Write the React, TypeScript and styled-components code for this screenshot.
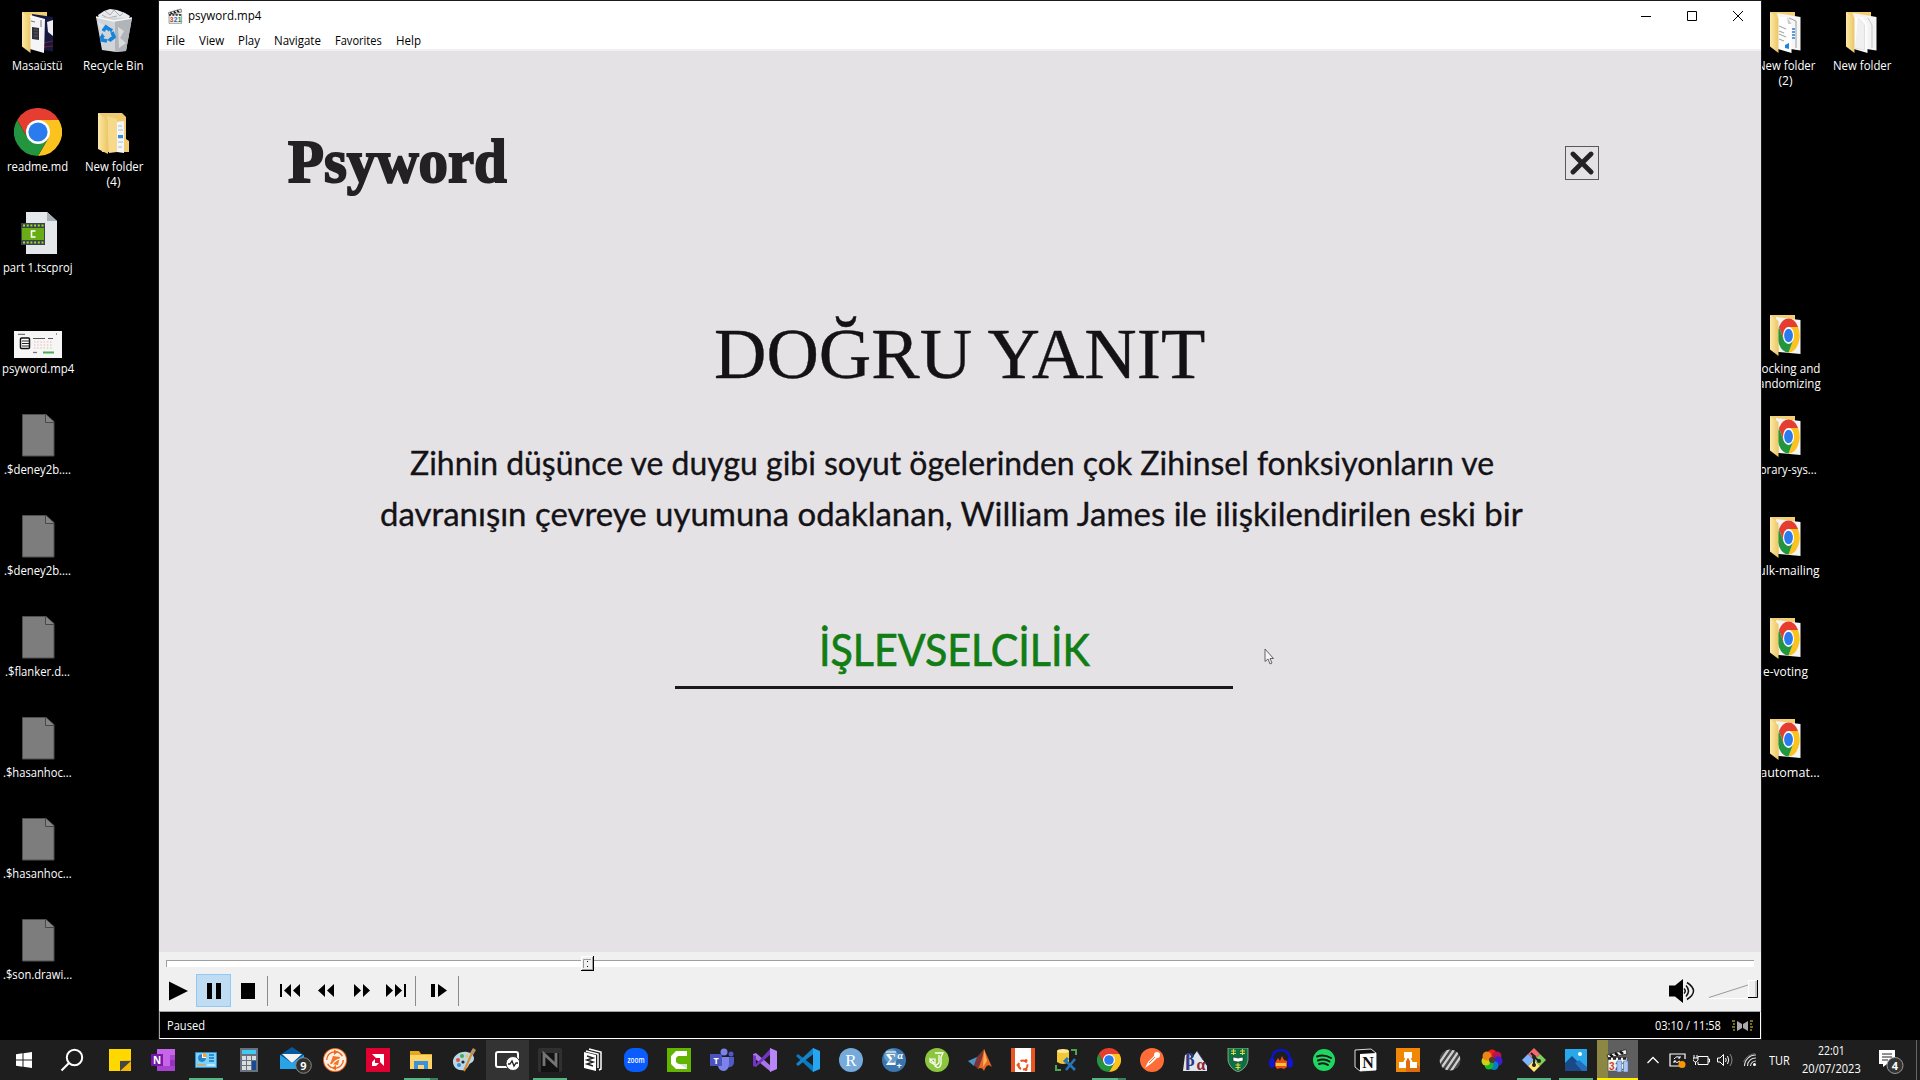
import React, { ReactNode, useLayoutEffect, useRef, useState } from "react";
import styled, { createGlobalStyle, css } from "styled-components";

const ui = `"Open Sans", "Noto Sans", "Liberation Sans", sans-serif`;

const Global = createGlobalStyle`
  * { box-sizing: border-box; }
  html, body { margin: 0; padding: 0; background: #000; overflow: hidden; }
  svg { display: block; flex: none; }
`;

/* ---------- text condensed or stretched to a set width ---------- */

const Slot = styled.span<{ $w: number }>`
  display: block;
  flex: none;
  width: ${(p) => p.$w}px;
  white-space: pre;
`;
const Stretch = styled.span`
  display: inline-block;
  transform-origin: 0 50%;
`;

function Fit({ w, children }: { w: number; children: string }) {
  const ref = useRef<HTMLSpanElement>(null);
  const [scale, setScale] = useState(1);
  useLayoutEffect(() => {
    if (ref.current) setScale(w / ref.current.offsetWidth);
  }, [w, children]);
  return (
    <Slot $w={w}>
      <Stretch ref={ref} style={{ transform: `scaleX(${scale})` }}>
        {children}
      </Stretch>
    </Slot>
  );
}

/* ---------- desktop ---------- */

const Desktop = styled.main`
  position: relative;
  display: flex;
  flex-direction: column;
  width: 1920px;
  height: 1080px;
  overflow: hidden;
  background: #000;
  font-family: ${ui};
  font-size: 12px;
  color: #fff;
`;
const IconGrid = styled.div`
  flex: 1;
  min-height: 0;
  display: grid;
  grid-template-columns: repeat(25, 76px);
  grid-auto-rows: 101px;
`;
const Shortcut = styled.div<{ $col: number; $row: number }>`
  grid-column: ${(p) => p.$col};
  grid-row: ${(p) => p.$row};
  display: flex;
  flex-direction: column;
  align-items: center;
  padding-top: 7px;
  svg { margin-bottom: 3px; }
`;
const Label = styled.div`
  display: flex;
  flex-direction: column;
  align-items: center;
  padding-right: 1px;
  line-height: 15px;
`;

function Chrome({ size = 24 }: { size?: number }) {
  return (
    <svg width={size} height={size} viewBox="0 0 48 48">
      <ChromeArt />
    </svg>
  );
}
function ChromeArt() {
  return (
    <g>
      <path d="M3.2 12A24 24 0 0 1 44.8 12H24L13.6 30Z" fill="#e53d30" />
      <path d="M44.8 12A24 24 0 0 1 24 48L34.4 30L24 12Z" fill="#fcc31e" />
      <path d="M24 48A24 24 0 0 1 3.2 12L13.6 30H34.4Z" fill="#24953f" />
      <circle cx="24" cy="24" r="12" fill="#fff" />
      <circle cx="24" cy="24" r="9.6" fill="#2a7bee" />
    </g>
  );
}

const folderDefs = (
  <defs>
    <linearGradient id="fold" x1="0" x2="1">
      <stop offset="0" stopColor="#ffe9a6" />
      <stop offset="1" stopColor="#e9c768" />
    </linearGradient>
  </defs>
);
const Folder = ({ children }: { children: ReactNode }) => (
  <svg width="48" height="48" viewBox="0 0 48 48">
    {folderDefs}
    <path d="M8 5H33V42H12Z" fill="#f2cf72" />
    {children}
    <path d="M8 5L16.5 11V46L8 39.5Z" fill="url(#fold)" />
  </svg>
);
const ChromeFolder = () => (
  <Folder>
    <path d="M14 7L38.500 10V44L17 42Z" fill="#f4f4f4" />
    <g transform="translate(15.500 8.500) scale(.46 .71)"><ChromeArt /></g>
  </Folder>
);
const DocsFolder = () => (
  <Folder>
    <path d="M15 6L38.500 10V43.500L22 41Z" fill="#f6f6f6" />
    <path d="M27 11L34 14V41" fill="none" stroke="#777" strokeWidth=".7" />
    <path d="M30 22h3M30 25h3M30 28h3M30 31h3" stroke="#2a7fd0" strokeWidth="1.6" />
    <path d="M16 10L25 10L29.500 17V46L16 42Z" fill="#fff" />
    <path d="M25 10L29.500 17H26Z" fill="#ccc" />
    <path d="M17 19l7 3M17 24l5 2M17 27l7 3M17 32l5 2" stroke="#aaa" strokeWidth="1.2" />
    <path d="M23 38l4-2v6l-4-1z" fill="#1e88d8" />
  </Folder>
);
const PlainFolder = () => (
  <Folder>
    <path d="M15 6L38.500 10V43.500L22 41Z" fill="#f4f4f4" />
    <path d="M30 11L34 18V41" fill="none" stroke="#bbb" strokeWidth=".8" />
    <path d="M16 10L25 10L29.500 17V46L16 42Z" fill="#fcfcfc" />
    <path d="M20 11L26.500 18V43L17 41" fill="#f0f0f0" stroke="#ccc" strokeWidth=".5" />
  </Folder>
);
const PhotoFolder = () => (
  <Folder>
    <path d="M18 7L39 10V44.500L22 42Z" fill="#15183f" />
    <path d="M33 15l6-2v16l-5-4z" fill="#f0eef2" />
    <path d="M30 36l9-2M30 40l9-1" stroke="#7c2034" strokeWidth="1" />
    <path d="M16 8L31 12L30 46L16 42Z" fill="#f5f5f8" />
    <path d="M18 20l7 1v12l-7-1z" fill="#303139" />
    <path d="M20 23h4M20 26h4M20 29h4" stroke="#888" strokeWidth=".5" />
    <path d="M17 14l4 1M27 13v7" stroke="#555" strokeWidth=".8" />
  </Folder>
);
const StackFolder = () => (
  <svg width="48" height="48" viewBox="0 0 48 48">
    {folderDefs}
    <path d="M8 5H32L36 9V31L39 33V44H12Z" fill="#f0cc70" />
    <path d="M27 14L34 13V45L27 44Z" fill="#f4f6fa" />
    <path d="M28 18h4M28 22h5M28 30h5M28 34h5M28 39h4" stroke="#9cb5d0" strokeWidth=".9" />
    <path d="M28 27h5v3h-5z" fill="#3290d8" />
    <path d="M17 8L27 11V44L19 45Z" fill="#f6d98b" />
    <path d="M8 5L18 12V46L8 41Z" fill="url(#fold)" />
  </svg>
);
const RecycleBin = () => (
  <svg width="48" height="48" viewBox="0 0 48 48">
    <path d="M8 8l6-4 6-2 7 1 8 3 5 3-3 5H10z" fill="#e9eaec" />
    <path d="M15 4l5 4 4-5 6 6 4-4M12 8l6 3 9-2" stroke="#a9acb1" fill="none" />
    <path d="M6 10L42 11L36 44L26 45L12 43Z" fill="#d2d5d8" />
    <path d="M25 14L42 11L36 44L25 45Z" fill="#b1b5b9" />
    <path d="M6 10L24 14L42 11" fill="none" stroke="#f7f7f7" strokeWidth="1.3" />
    <path d="M28 20l6 4-4 7 6 5-7 5zM8 15l6 3-3 6z" fill="#e4e6e8" opacity=".8" />
    <g fill="none" stroke="#1385dc" strokeWidth="3.600">
      <path d="M13 24l3-4 4 3M22 25l2 5-4 3M17 34l-5-1 0-4" />
    </g>
    <path d="M18 20l5 2-2 4zM21 30v5l-4-2zM10 31l2-5 3 4z" fill="#1385dc" />
  </svg>
);
const BlankFile = () => (
  <svg width="48" height="48" viewBox="-2 0 48 48">
    <path d="M6.500 3.500H30L38 10.500V45H6.500Z" fill="#7d7d7d" stroke="#505050" />
    <path d="M29.500 3.500V11.500H38" fill="#858585" stroke="#484848" />
  </svg>
);
const CamtasiaFile = () => (
  <svg width="48" height="48" viewBox="0 0 48 48">
    <path d="M12 3H33L43 12V45H12Z" fill="#e4e8ea" />
    <path d="M33 3V12H43Z" fill="#a7b0b8" />
    <path d="M7 14H31V36H7Z" fill="#38444a" />
    <path d="M8 19H30V31H8Z" fill="#68ad14" />
    <path d="M9 16.500H30M9 33.500H30" stroke="#a0de20" strokeWidth="2" strokeDasharray="2 1.700" />
    <path d="M21.500 22H17.500V28H21.500" fill="none" stroke="#fff" strokeWidth="1.600" />
  </svg>
);
const VideoThumb = () => (
  <svg width="48" height="48" viewBox="0 0 48 48">
    <path d="M0 21H48V48H0Z" fill="#f6f6f6" />
    <path d="M4 24.300h7M19 28.500h12M34 28.500h5" stroke="#555" strokeWidth="1" />
    <path d="M42 24h1" stroke="#333" />
    <rect x="6.500" y="28" width="9" height="10.500" rx="1" fill="#fff" stroke="#111" strokeWidth="1.500" />
    <path d="M8 31h7M8 33.500h7M8 36h7" stroke="#222" strokeWidth="1" />
    <path d="M20 32h19M20 35h19M20 38h19" stroke="#eab7b7" strokeWidth="1" strokeDasharray="1.500 1.700" />
    <path d="M19 42.500h4" stroke="#777" strokeWidth="1.300" />
    <path d="M29 42.500h11" stroke="#4cab55" strokeWidth="2" />
  </svg>
);

type Item = { col: number; row: number; icon: ReactNode; lines: [string, number][] };
const shortcuts: Item[] = [
  { col: 1, row: 1, icon: <PhotoFolder />, lines: [["Masaüstü", 51]] },
  { col: 2, row: 1, icon: <RecycleBin />, lines: [["Recycle Bin", 61]] },
  { col: 1, row: 2, icon: <Chrome size={48} />, lines: [["readme.md", 61]] },
  { col: 2, row: 2, icon: <StackFolder />, lines: [["New folder", 58], ["(4)", 14]] },
  { col: 1, row: 3, icon: <CamtasiaFile />, lines: [["part 1.tscproj", 70]] },
  { col: 1, row: 4, icon: <VideoThumb />, lines: [["psyword.mp4", 72]] },
  { col: 1, row: 5, icon: <BlankFile />, lines: [[".$deney2b....", 67]] },
  { col: 1, row: 6, icon: <BlankFile />, lines: [[".$deney2b....", 67]] },
  { col: 1, row: 7, icon: <BlankFile />, lines: [[".$flanker.d...", 65]] },
  { col: 1, row: 8, icon: <BlankFile />, lines: [[".$hasanhoc...", 69]] },
  { col: 1, row: 9, icon: <BlankFile />, lines: [[".$hasanhoc...", 69]] },
  { col: 1, row: 10, icon: <BlankFile />, lines: [[".$son.drawi...", 69]] },
  { col: 24, row: 1, icon: <DocsFolder />, lines: [["New folder", 58], ["(2)", 14]] },
  { col: 25, row: 1, icon: <PlainFolder />, lines: [["New folder", 58]] },
  { col: 24, row: 4, icon: <ChromeFolder />, lines: [["Blocking and", 69], ["Randomizing", 70]] },
  { col: 24, row: 5, icon: <ChromeFolder />, lines: [["library-sys...", 63]] },
  { col: 24, row: 6, icon: <ChromeFolder />, lines: [["bulk-mailing", 69]] },
  { col: 24, row: 7, icon: <ChromeFolder />, lines: [["e-voting", 45]] },
  { col: 24, row: 8, icon: <ChromeFolder />, lines: [["r-automat...", 69]] },
];

/* ---------- player window ---------- */

const Window = styled.section`
  position: absolute;
  left: 158px;
  top: 0;
  width: 1604px;
  height: 1040px;
  border: 1px solid #1c1a1f;
  display: flex;
  flex-direction: column;
  background: #f0f0f0;
  color: #000;
`;
const TitleBar = styled.header`
  height: 30px;
  flex: none;
  display: flex;
  align-items: center;
  padding-left: 8px;
  background: #fff;
  line-height: 16px;
`;
const TitleText = styled.div`
  flex: 1;
  padding-left: 5px;
`;
const Caption = styled.div`
  display: flex;
  gap: 34px;
  padding: 0 17px 1px 0;
`;
const MenuBar = styled.nav`
  height: 18px;
  flex: none;
  display: flex;
  align-items: center;
  gap: 14px;
  padding: 1px 0 0 7px;
  background: #fff;
  line-height: 18px;
`;
const Video = styled.div`
  margin-top: 2px;
  height: 901px;
  flex: none;
  display: flex;
  flex-direction: column;
  align-items: center;
  padding-top: 84px;
  background: #e4e2e5;
  color: #141216;
`;
const VideoHead = styled.div`
  align-self: stretch;
  height: 56px;
  display: flex;
  align-items: center;
  justify-content: space-between;
  padding: 0 162px 0 129px;
`;
const Wordmark = styled.div`
  padding-bottom: 5px;
  font: bold 62px/60px "Liberation Serif", serif;
  -webkit-text-stroke: 2px #232124;
  color: #232124;
`;
const CloseBox = styled.div`
  width: 34px;
  height: 34px;
  margin-bottom: 1px;
  border: 1.5px solid #59575b;
  display: grid;
  place-items: center;
`;
const Verdict = styled.h1`
  margin: 133px 2px 0 0;
  font: 400 72px/60px "Liberation Serif", serif;
  -webkit-text-stroke: 0.4px #141216;
`;
const Definition = styled.p`
  margin: 53px 17px 0 0;
  display: flex;
  flex-direction: column;
  align-items: center;
  font: 400 32px/51px Lato, sans-serif;
  -webkit-text-stroke: 0.35px #141216;
`;
const Answer = styled.div`
  width: 558px;
  height: 70px;
  margin: 80px 12px 0 0;
  display: flex;
  justify-content: center;
  border-bottom: 3px solid #1a181b;
  font: 400 44.5px/60px Lato, sans-serif;
  color: #117d14;
  -webkit-text-stroke: 0.7px #117d14;
`;
const Cursor = styled.svg`
  position: absolute;
  left: 1105px;
  top: 647px;
`;
const Seek = styled.div`
  height: 20px;
  flex: none;
  padding: 8px 7px 0;
`;
const Groove = styled.div`
  position: relative;
  height: 7px;
  background: #fff;
  border: 1px solid #a0a0a0;
  border-width: 1px 0 0 1px;
`;
const Thumb = styled.div`
  position: absolute;
  left: 414px;
  top: -5px;
  width: 13px;
  height: 15px;
  background: #f0f0f0;
  border: solid #000;
  border-width: 0 1px 1px 0;
  box-shadow: inset 1px 1px #fff, inset -1px -1px #a0a0a0;
  display: grid;
  place-items: center;
`;
const Controls = styled.div`
  height: 39px;
  flex: none;
  display: flex;
  align-items: flex-start;
  padding: 2px 2px 0 2px;
`;
const ToolButton = styled.div<{ $w: number; $on?: boolean }>`
  width: ${(p) => p.$w}px;
  height: 33px;
  display: grid;
  place-items: center;
  ${(p) =>
    p.$on &&
    css`
      background: #c0dcf3;
      border: 1px solid #90c8f6;
    `}
`;
const Rule = styled.div<{ $gap: number }>`
  width: 1px;
  height: 30px;
  margin: 2px ${(p) => p.$gap}px 0 2px;
  background: #8b8b8b;
`;
const VolumeSlider = styled.div`
  width: 62px;
  padding: 6px 0 0 11px;
`;
const Spacer = styled.div`
  flex: 1;
`;
const StatusBar = styled.footer`
  flex: 1;
  display: flex;
  align-items: center;
  gap: 11px;
  padding: 2px 7px 0 7px;
  background: #000;
  color: #fff;
  border: 1px solid #fff;
  border-top-color: #a0a0a0;
  border-left-color: #a0a0a0;
  line-height: 16px;
`;

const Clapper = ({ size, paused }: { size: number; paused?: boolean }) => (
  <svg width={size} height={size} viewBox="0 0 24 24">
    <path d="M2 7L21 1.500L22 6L3 10Z" fill="#eee" stroke="#222" strokeWidth=".8" />
    <path d="M5 6.500l3 2.500M10 5l3 2.500M15 3.500l3 2.500" stroke="#111" strokeWidth="2.400" />
    <path d="M3 9.500H22V23H3Z" fill="#f4f4f4" stroke="#555" strokeWidth=".8" />
    <path d="M3 10.500H22" stroke="#222" strokeWidth="2.400" strokeDasharray="3 2" />
    <text x="4" y="21.500" fontFamily="Liberation Sans, sans-serif" fontWeight="700" fontSize="10" fill="#c84414">3</text>
    <text x="10" y="21.500" fontFamily="Liberation Sans, sans-serif" fontWeight="700" fontSize="10" fill="#2062b5">2</text>
    <text x="16" y="21.500" fontFamily="Liberation Sans, sans-serif" fontWeight="700" fontSize="10" fill="#208a38">1</text>
    {paused && <path d="M12 13h4.500v11H12zM18.500 13H23v11h-4.500z" fill="#a9c6f5" stroke="#5277bd" strokeWidth=".6" />}
  </svg>
);

const Glyph = ({ w, h = 20, d }: { w: number; h?: number; d: string }) => (
  <svg width={w} height={h} viewBox={`0 0 ${w} ${h}`}>
    <path d={d} />
  </svg>
);

function Player() {
  return (
    <Window>
      <TitleBar>
        <Clapper size={16} />
        <TitleText><Fit w={73}>psyword.mp4</Fit></TitleText>
        <Caption>
          <svg width="12" height="12"><path d="M1 6.500H11" stroke="#000" /></svg>
          <svg width="12" height="12"><path d="M1.500 1.500H10.500V10.500H1.500Z" fill="none" stroke="#000" /></svg>
          <svg width="12" height="12"><path d="M1 1L11 11M11 1L1 11" stroke="#000" /></svg>
        </Caption>
      </TitleBar>
      <MenuBar>
        <Fit w={19}>File</Fit>
        <Fit w={25}>View</Fit>
        <Fit w={22}>Play</Fit>
        <Fit w={47}>Navigate</Fit>
        <Fit w={47}>Favorites</Fit>
        <Fit w={25}>Help</Fit>
      </MenuBar>
      <Video>
        <VideoHead>
          <Wordmark><Fit w={219}>Psyword</Fit></Wordmark>
          <CloseBox>
            <svg width="24" height="24"><path d="M3 3L21 21M21 3L3 21" stroke="#232124" strokeWidth="4.800" strokeLinecap="round" /></svg>
          </CloseBox>
        </VideoHead>
        <Verdict><Fit w={491}>DOĞRU YANIT</Fit></Verdict>
        <Definition>
          <Fit w={1084}>Zihnin düşünce ve duygu gibi soyut ögelerinden çok Zihinsel fonksiyonların ve</Fit>
          <Fit w={1143}>davranışın çevreye uyumuna odaklanan, William James ile ilişkilendirilen eski bir</Fit>
        </Definition>
        <Answer><Fit w={271}>İŞLEVSELCİLİK</Fit></Answer>
      </Video>
      <Cursor width="12" height="18" viewBox="0 0 12 18">
        <path d="M1 1V13.500L4 11L6 16L8 15L6 10.500H9.500Z" fill="#f4f3f5" stroke="#555" strokeWidth=".9" />
      </Cursor>
      <Seek>
        <Groove>
          <Thumb>
            <svg width="9" height="9"><path d="M.5 9V.5H8" stroke="#999" fill="none" /><path d="M4 2h1v1H4zM4 7h1v1H4z" /></svg>
          </Thumb>
        </Groove>
      </Seek>
      <Controls>
        <ToolButton $w={35}><Glyph w={20} d="M0 0.500L19 10L0 19.500Z" /></ToolButton>
        <ToolButton $w={35} $on><Glyph w={14} h={16} d="M0 0H5V16H0ZM9 0H14V16H9Z" /></ToolButton>
        <ToolButton $w={34}><Glyph w={14} h={16} d="M0 0H14V16H0Z" /></ToolButton>
        <Rule $gap={4} />
        <ToolButton $w={36}><Glyph w={20} h={13} d="M0 0H2V13H0ZM11 0V13L4 6.500ZM20 0V13L13 6.500Z" /></ToolButton>
        <ToolButton $w={36}><Glyph w={16} h={13} d="M7 0V13L0 6.500ZM16 0V13L9 6.500Z" /></ToolButton>
        <ToolButton $w={35}><Glyph w={16} h={13} d="M0 0V13L7 6.500ZM9 0V13L16 6.500Z" /></ToolButton>
        <ToolButton $w={34}><Glyph w={20} h={13} d="M0 0V13L7 6.500ZM9 0V13L16 6.500ZM18 0H20V13H18Z" /></ToolButton>
        <Rule $gap={6} />
        <ToolButton $w={34}><Glyph w={16} h={13} d="M0 0H4V13H0ZM7 0V13L16 6.500Z" /></ToolButton>
        <Rule $gap={0} />
        <Spacer />
        <ToolButton $w={30}>
          <svg width="26" height="24">
            <path d="M0 6.500H6L14 0V24L6 17.500H0Z" />
            <path d="M15 9.500q2.500 2.500 0 5M17 6.500q5 5.500 0 11M18 3.500q13 8.500 0 17" fill="none" stroke="#111" strokeWidth="1.500" />
          </svg>
        </ToolButton>
        <VolumeSlider>
          <svg width="50" height="20">
            <path d="M1 18.500H40" stroke="#fff" />
            <path d="M1 17.500L40 5" stroke="#999" />
            <path d="M40 0H49V18H40Z" fill="#f0f0f0" />
            <path d="M40.500 17V.5H48" stroke="#fff" fill="none" />
            <path d="M48 1V17" stroke="#a0a0a0" />
            <path d="M40 17.500H49.500V0" stroke="#000" fill="none" />
          </svg>
        </VolumeSlider>
      </Controls>
      <StatusBar>
        <Fit w={38}>Paused</Fit>
        <Spacer />
        <Fit w={66}>03:10 / 11:58</Fit>
        <svg width="21" height="12">
          <path d="M5 1L10 4V8L5 11ZM16 1L11 4V8L16 11Z" fill="#aaa" />
          <path d="M0 1h3M1 4h2M0 7h3M1 10h2M18 1h3M18 4h2M18 7h3M18 10h2" stroke="#e8e020" strokeWidth="1.200" />
        </svg>
      </StatusBar>
    </Window>
  );
}

/* ---------- taskbar ---------- */

const Bar = styled.div`
  height: 40px;
  flex: none;
  display: flex;
  background: #1e1e1e;
`;
const Task = styled.div<{ $w: number; $run?: "one" | "many"; $bg?: string }>`
  width: ${(p) => p.$w}px;
  flex: none;
  display: grid;
  place-items: center;
  background: ${(p) => p.$bg ?? "none"};
  ${(p) =>
    p.$run &&
    css`
      background-image: linear-gradient(
        90deg,
        #57b584 ${p.$run === "many" ? "76%" : "100%"},
        #3c7e5d 0
      );
      background-size: 34px 2px;
      background-position: 50% 100%;
      background-repeat: no-repeat;
    `}
`;
const ActiveTask = styled.div`
  width: 41px;
  height: 40px;
  flex: none;
  display: grid;
  place-items: center;
  padding-top: 2px;
  border-bottom: 2px solid #fff000;
  background: linear-gradient(90deg, #8c8742 11px, #5f5f5f 0);
`;
const StartGap = styled.div`
  width: 2.5px;
`;
const Tray = styled.div`
  display: flex;
  align-items: center;
  padding-left: 9px;
  color: #fff;
`;
const TrayIcon = styled.div<{ $w: number }>`
  width: ${(p) => p.$w}px;
`;
const Clock = styled.div`
  width: 60px;
  margin: 0 0 1px 12px;
  display: flex;
  flex-direction: column;
  align-items: center;
  line-height: 18px;
`;
const Notices = styled.div`
  margin: 3px 0 0 17px;
`;
const PeekEdge = styled.div`
  width: 1px;
  height: 40px;
  margin-left: 11px;
  background: #666;
`;

const I = ({ children }: { children: ReactNode }) => (
  <svg width="24" height="24" viewBox="0 0 24 24">{children}</svg>
);
const T = ({ x, y, s, f = "#fff", serif, children }: { x: number; y: number; s: number; f?: string; serif?: boolean; children: string }) => (
  <text x={x} y={y} fontSize={s} fill={f} fontWeight="700" textAnchor="middle" fontFamily={serif ? "Liberation Serif, serif" : "Open Sans, sans-serif"}>
    {children}
  </text>
);

type App = { icon: ReactNode; run?: "one" | "many"; bg?: string };
const apps: App[] = [
  { icon: <I><path d="M1 1H23V12L12 23H1Z" fill="#ffd800" /><path d="M12 23V13L23 12V23Z" fill="#f5b800" /><path d="M12 13H23L12 23Z" fill="#444" /></I> },
  { icon: <I><path d="M6 1H24V23H6Z" fill="#c765e8" /><path d="M19 7H24V12H19Z" fill="#ab47d4" /><path d="M19 12H24V18H19Z" fill="#9332bf" /><path d="M6 18H24V23H6Z" fill="#a842d0" /><path d="M0 6H12V18H0Z" fill="#7719aa" /><T x={6} y={16} s={10}>N</T></I> },
  { run: "one", icon: <I><path d="M1.500 4.500H22.500V19.500H1.500Z" fill="#7fd0fa" stroke="#318fcb" /><circle cx="8" cy="10" r="4" fill="#fff" /><path d="M8 10V6A4 4 0 1 0 12 10Z" fill="#2785d0" /><path d="M9 9V5A4 4 0 0 1 13 9Z" fill="#f3a72d" /><path d="M15 7h5M15 10h5M15 13h5" stroke="#1777ba" strokeWidth="1.500" /><path d="M3 17h8" stroke="#e9a02a" strokeWidth="1.300" /><path d="M13 17h8" stroke="#fff" /></I> },
  { icon: <I><path d="M3 0H21V24H3Z" fill="#68727d" /><path d="M5 2H19V6H5Z" fill="#41c9f4" /><path d="M5 8h4v4H5zM10 8h4v4h-4zM15 8h4v4h-4zM5 13h4v4H5zM10 13h4v4h-4zM5 18h4v4H5zM10 18h4v4h-4z" fill="#d8dde1" /><path d="M15 13H19V22H15Z" fill="#154c93" /></I> },
  { icon: <svg width="40" height="28" viewBox="-8 -1 40 28"><path d="M0 8L12 0L24 8V22H0Z" fill="#075a9e" /><path d="M2 7H22L12 16Z" fill="#f3f3f3" /><path d="M0 8L12 16L24 8V22H0Z" fill="#27a3e7" /><circle cx="23.500" cy="18.500" r="7.800" fill="#303030" stroke="#8b8b8b" /><T x={23.5} y={22.5} s={11}>9</T></svg> },
  { icon: <I><circle cx="12" cy="12" r="12" fill="#f06a1c" /><circle cx="12" cy="12" r="11" fill="#fff0e5" /><circle cx="12" cy="12" r="8.300" fill="none" stroke="#f06a1c" strokeWidth="1.400" strokeDasharray="22 4" /><path d="M7 16L10 8L17 9L15 17Z" fill="#f27729" /><path d="M11 1.500l4 2.500-4 3M13 22.500l-4-2.500 4-3" fill="#f06a1c" /><path d="M9 17Q12 12 17 11" stroke="#fff" fill="none" strokeWidth="1.200" /></I> },
  { icon: <I><path d="M0 0H24V24H0Z" fill="#df0031" /><path d="M6 6H18V18L14 14V10H10ZM9 11V15H13L10 18H6V14Z" fill="#fff" /></I> },
  { run: "many", icon: <I><path d="M1 3H10L12 6H23V20H1Z" fill="#e7a81f" /><path d="M1 7H23V21H1Z" fill="#ffd467" /><path d="M5 13H19V21H15V17H9V21H5Z" fill="#3c91dc" /></I> },
  { icon: <I><path d="M1 15C0 8 8 3 15 4C23 5 24 13 19 15C16 16 17 20 12 22C6 23 2 20 1 15Z" fill="#b8d7e8" /><circle cx="6" cy="12" r="2" fill="#e84f39" /><circle cx="10" cy="8" r="2" fill="#48ac45" /><circle cx="15" cy="8" r="1.500" fill="#f0c738" /><circle cx="7" cy="17" r="2" fill="#368bd7" /><circle cx="11" cy="14" r="1.600" fill="#222" /><path d="M20 5L12 23" stroke="#dc8b31" strokeWidth="2" /><path d="M18 5L21 0L24 2L21 7Z" fill="#bc9264" /></I> },
  { bg: "#333", icon: <I><rect x="1" y="4" width="22" height="15" rx="2" fill="none" stroke="#fff" strokeWidth="2" /><circle cx="18" cy="15.500" r="7" fill="#fff" stroke="#333" /><path d="M13 16H15L17 13L19 18L21 15H23" fill="none" stroke="#222" strokeWidth="1.300" /></I> },
  { run: "one", icon: <I><rect width="24" height="24" rx="2" fill="#303030" /><path d="M3 5H21V24H3Z" fill="#121212" /><path d="M6 18V6L18 17V5" fill="none" stroke="#757575" strokeWidth="2.800" /></I> },
  { icon: <I><path d="M8 1L20 4V21L18 22M5 3L17 6V20" fill="none" stroke="#fff" strokeWidth="1.500" /><path d="M3 4L15 7V23L3 20Z" fill="#fff" /><path d="M6 8L12 10L6 12L12 14L6 16L12 18" fill="none" stroke="#222" strokeWidth="1.500" /></I> },
  { icon: <I><rect width="24" height="24" rx="9" fill="#0b5cff" /><text x="12" y="14.500" fontSize="8" fontWeight="600" fill="#fff" textAnchor="middle" fontFamily="Open Sans, sans-serif" textLength="17" lengthAdjust="spacingAndGlyphs">zoom</text></I> },
  { icon: <I><path d="M0 0H24V24H0Z" fill="#62b400" /><path d="M20 3H9L4 8V16L9 21H20V16H11L9 14V10L11 8H20Z" fill="#fff" /><path d="M9 14L11 16H20V21Z" fill="#d6e6d2" /></I> },
  { icon: <I><circle cx="14" cy="4" r="3.500" fill="#7b83eb" /><circle cx="21" cy="6" r="2.500" fill="#5059c9" /><path d="M16 9H24V15Q23 20 17 19Z" fill="#5059c9" /><path d="M8 9H19V17Q18 23 13 23Q8 22 8 17Z" fill="#7b83eb" /><path d="M0 6H12V18H0Z" fill="#4b53bc" /><T x={6} y={15.5} s={9}>T</T></I> },
  { icon: <I><path d="M0 6L3 5L18 18L18 24L0 9Z" fill="#a875e8" /><path d="M0 18V7L3 8V16L18 0V6L3 19Z" fill="#7334c4" /><path d="M17 0L24 3V21L17 24Z" fill="#b887f5" /></I> },
  { icon: <I><path d="M0 8L2 6L20 20L17 24Z" fill="#0879c2" /><path d="M0 16L17 0L20 4L2 18Z" fill="#1483c9" /><path d="M17 0L24 3V21L17 24Z" fill="#27a5f0" /></I> },
  { icon: <I><circle cx="12" cy="12" r="12" fill="#75aadb" /><text x="12" y="18" fontSize="17" fill="#fff" textAnchor="middle" fontFamily="Liberation Serif, serif">R</text></I> },
  { icon: <I><circle cx="12" cy="12" r="12" fill="#3b75ae" /><circle cx="9" cy="8" r="7" fill="#669cc9" /><T x={9} y={17} s={16} serif>Σ</T><T x={18} y={11} s={10} serif>α</T><T x={17} y={21} s={9}>+</T><path d="M4 4H14" stroke="#fff" /></I> },
  { icon: <I><circle cx="12" cy="12" r="12" fill="#8cc63f" /><path d="M10 5H18L16 9V16Q14 22 10 18L14 15V7" fill="none" stroke="#fff" strokeWidth="1.300" /><path d="M5 11H10V17L5 14V11L9 15" fill="none" stroke="#fff" strokeWidth="1.200" /></I> },
  { icon: <I><path d="M0 13L9 9L12 12L6 18Z" fill="#4b93c7" /><path d="M9 9L16 1L14 14L10 21L6 17Z" fill="#7c3439" /><path d="M16 1L24 19Q19 14 16 23Q14 18 10 21Q15 10 16 1Z" fill="#e66a25" /><path d="M16 1L19 13L15 19Z" fill="#ffb056" /></I> },
  { icon: <I><path d="M0 0H24V24H0Z" fill="#e95420" /><path d="M4 0H20V24H4Z" fill="#fff" /><circle cx="12" cy="17" r="4.500" fill="none" stroke="#e95420" strokeWidth="2" strokeDasharray="7 2" /><circle cx="7" cy="17" r="1.500" fill="#e95420" /><circle cx="15" cy="12.500" r="1.500" fill="#e95420" /><circle cx="15" cy="21.500" r="1.500" fill="#e95420" /></I> },
  { icon: <I><path d="M3 3V14Q9 18 15 14V3Z" fill="#f3c838" /><ellipse cx="9" cy="3" rx="6" ry="2" fill="#ffe798" /><path d="M17 2H22V7M2 17V22H7" fill="none" stroke="#4fa454" strokeWidth="2" /><path d="M11 12L21 22M21 11L12 22" stroke="#2476b9" strokeWidth="2.600" /><path d="M10 14L14 10" stroke="#2476b9" strokeWidth="3" /></I> },
  { run: "many", icon: <Chrome /> },
  { icon: <I><circle cx="12" cy="12" r="12" fill="#ff6c37" /><circle cx="17" cy="7" r="3" fill="#fff" /><path d="M15 7L8 14L5 20L12 15L17 10Z" fill="#fff" /><path d="M9 15L15 9" stroke="#ff6c37" /></I> },
  { icon: <I><path d="M0 23L2 7L6 5L9 10L14 3L24 18V23Z" fill="#e3e5ed" /><path d="M2 7L6 5V22M14 3L20 12" stroke="#2b3a86" fill="none" strokeWidth=".7" /><T x={7} y={18} s={18} f="#253a82" serif>β</T><T x={18} y={22} s={16} f="#8b2432" serif>α</T></I> },
  { icon: <I><path d="M2 0H22V12Q21 20 12 24Q3 20 2 12Z" fill="#087244" stroke="#d7d7ab" strokeWidth=".6" /><path d="M5 3h5M14 3h5M7.500 1v6M16.500 1v6M5 5.500h5M14 5.500h5M12 15v7M9.500 17h5M9.500 19.500h5" stroke="#e8d444" strokeWidth="1.100" /><path d="M7 9L12 10L17 9V13L12 14L7 13Z" fill="#fff" stroke="#222" strokeWidth=".6" /></I> },
  { icon: <I><path d="M3 15V11Q4 2 12 2Q20 2 21 11V15" fill="none" stroke="#0b14cf" strokeWidth="2.500" /><ellipse cx="3" cy="15" rx="3" ry="5" fill="#1118d5" /><ellipse cx="21" cy="15" rx="3" ry="5" fill="#1118d5" /><path d="M6 15L9 10L11 13L13 8L15 12L18 13V19L15 21L12 20L8 21L6 18Z" fill="#eb4c18" /><path d="M7 15H17V18H7Z" fill="#ffc52e" /></I> },
  { icon: <I><circle cx="12" cy="12" r="11" fill="#1ed760" /><path d="M5 8.500Q12 6 19 10M6 12.500Q12 10 17.500 13.500M7 16Q12 14 16 17" fill="none" stroke="#191919" strokeWidth="2" strokeLinecap="round" /></I> },
  { icon: <I><path d="M1 2L17 1L22 5V22L6 23L1 19Z" fill="#111" stroke="#ddd" /><path d="M6 6L22 5V22L6 23Z" fill="#fff" /><T x={14} y={20} s={16} f="#111" serif>N</T></I> },
  { icon: <I><path d="M0 0H24V24H0Z" fill="#f08705" /><path d="M10 9L24 19V24H10Z" fill="#df6c0c" /><path d="M12 7L7 17M12 7L17 17" stroke="#fff" strokeWidth="2" /><path d="M8 4h8v6H8zM3 14h7v6H3zM14 14h7v6h-7z" fill="#fff" /></I> },
  { icon: <I><defs><clipPath id="ball"><circle cx="12" cy="12" r="10.500" /></clipPath></defs><g clipPath="url(#ball)"><path d="M0 0H24V24H0Z" fill="#484848" /><path d="M-2 11L8 -4M0 17L13 -2M2 22L18 -1M6 25L22 1M11 26L25 5M16 27L27 11" stroke="#cfcfcf" strokeWidth="2.300" /></g></I> },
  { icon: <I><circle cx="12" cy="6" r="4.500" fill="#f31c17" /><circle cx="17" cy="8" r="4.500" fill="#b51553" /><circle cx="18" cy="13" r="4.500" fill="#3a20d0" /><circle cx="14" cy="17.500" r="4.500" fill="#087cc5" /><circle cx="9" cy="17" r="4.500" fill="#19b629" /><circle cx="6" cy="13" r="4.500" fill="#ccd111" /><circle cx="7" cy="8" r="4.500" fill="#ee8414" /><circle cx="12" cy="12" r="3" fill="#513b28" /></I> },
  { run: "one", icon: <I><path d="M12 0L18 6L12 12L6 6Z" fill="#f06b6d" /><path d="M6 6L12 12L6 18L0 12Z" fill="#80b3ff" /><path d="M18 6L24 12L18 18L12 12Z" fill="#80cf58" /><path d="M12 12L18 18L12 24L6 18Z" fill="#ffe374" /><path d="M9 5L12 8V18M12 9L17 13" stroke="#222" strokeWidth="2" fill="none" /><circle cx="12" cy="9" r="2" fill="#222" /><circle cx="17" cy="13" r="2" fill="#222" /><circle cx="12" cy="17" r="2" fill="#222" /></I> },
  { run: "one", icon: <I><path d="M1 1H23V23H1Z" fill="#29a9e9" /><path d="M1 15L8 8L23 23H1Z" fill="#194986" /><path d="M11 15L15 12L23 19V23H18Z" fill="#236ebc" /><circle cx="16" cy="6" r="2" fill="#fff" /></I> },
];

function Taskbar() {
  return (
    <Bar>
      <Task $w={48}>
        <svg width="16" height="16"><path d="M0 2.300L6.500 1.300V7.500H0ZM7.500 1.200L16 0V7.500H7.500ZM0 8.500H6.500V14.700L0 13.700ZM7.500 8.500H16V16L7.500 14.800Z" fill="#fff" /></svg>
      </Task>
      <Task $w={48}>
        <svg width="24" height="24"><circle cx="14.500" cy="9.500" r="7.700" fill="none" stroke="#fff" strokeWidth="2" /><path d="M9 15L1.500 22.500" stroke="#fff" strokeWidth="2.200" /></svg>
      </Task>
      <StartGap />
      {apps.map((a, i) => (
        <Task key={i} $w={i > 27 ? 42 : 43} $run={a.run} $bg={a.bg}>{a.icon}</Task>
      ))}
      <ActiveTask><Clapper size={24} paused /></ActiveTask>
      <Tray>
        <TrayIcon $w={22}><svg width="12" height="8"><path d="M.5 7L6 1.500L11.500 7" fill="none" stroke="#fff" strokeWidth="1.300" /></svg></TrayIcon>
        <TrayIcon $w={24}><svg width="18" height="18"><path d="M12 15H1V3H16V8" fill="none" stroke="#fff" strokeWidth="1.200" /><path d="M5 8Q8 4 11 7V5M11 7H9M11 10Q8 13 5 10V12M5 10H7" fill="none" stroke="#fff" /><circle cx="13" cy="13.500" r="3.500" fill="#ff9500" /></svg></TrayIcon>
        <TrayIcon $w={24}><svg width="17" height="12"><path d="M5 4V2.500H15V10.500H5V8M15 5H16.500V8H15" fill="none" stroke="#fff" /><path d="M1 1V4M4 1V4M0 4H5V6Q4 8 2.500 8Q1 8 0 6V4M2.500 8V11" fill="none" stroke="#fff" /></svg></TrayIcon>
        <TrayIcon $w={26}><svg width="17" height="14"><path d="M.5 5H3L6.500 1.500V12.500L3 9H.5Z" fill="none" stroke="#fff" /><path d="M8.500 5Q10 7 8.500 9M10.500 3Q13 7 10.500 11" fill="none" stroke="#fff" /><path d="M13 1Q17 7 13 13" fill="none" stroke="#888" /></svg></TrayIcon>
        <TrayIcon $w={26}><svg width="14" height="14"><path d="M1.500 13A11 11 0 0 1 13 2M4.500 13A8 8 0 0 1 13 5M7.500 13A5.500 5.500 0 0 1 13 8" fill="none" stroke="#ddd" strokeWidth="1.100" /><path d="M.5 9Q3 2 12 .5" fill="none" stroke="#888" strokeWidth=".7" /><circle cx="11.500" cy="11.500" r="1.500" fill="#fff" /></svg></TrayIcon>
        <Fit w={21}>TUR</Fit>
        <Clock>
          <Fit w={27}>22:01</Fit>
          <Fit w={59}>20/07/2023</Fit>
        </Clock>
        <Notices>
          <svg width="26" height="26">
            <path d="M0 1H16V15H8L4 18V15H0Z" fill="#fff" />
            <path d="M3 5H13M3 8H13M3 11H9" stroke="#222" />
            <circle cx="16" cy="16.500" r="8" fill="#333" stroke="#999" />
            <T x={16} y={20.5} s={11}>4</T>
          </svg>
        </Notices>
        <PeekEdge />
      </Tray>
    </Bar>
  );
}

export default function App() {
  return (
    <>
      <Global />
      <Desktop>
        <IconGrid>
          {shortcuts.map((s) => (
            <Shortcut key={`${s.col}-${s.row}`} $col={s.col} $row={s.row}>
              {s.icon}
              <Label>
                {s.lines.map(([text, w]) => (
                  <Fit key={text} w={w}>{text}</Fit>
                ))}
              </Label>
            </Shortcut>
          ))}
        </IconGrid>
        <Player />
        <Taskbar />
      </Desktop>
    </>
  );
}
